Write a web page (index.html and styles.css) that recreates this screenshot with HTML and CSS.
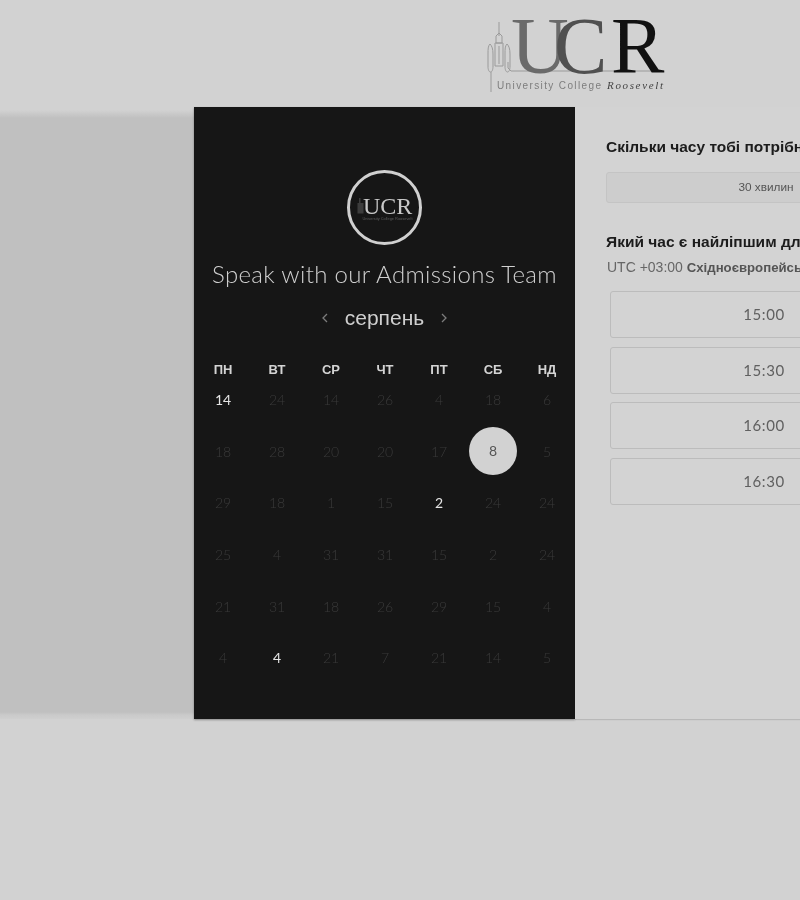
FILE: index.html
```html
<!DOCTYPE html>
<html lang="uk">
<head>
<meta charset="utf-8">
<title>Speak with our Admissions Team</title>
<link rel="stylesheet" href="styles.css">
</head>
<body>
<header class="top">
  <svg class="logo" width="180" height="80" viewBox="0 0 180 80" xmlns="http://www.w3.org/2000/svg">
    <g class="tower">
      <path d="M13 6V20M10 20L13 17L16 20V27H10ZM9 27H17V50H9ZM13 30V48"/>
      <path d="M4 28C2 30 2 33 2 38V50C2 54 3 56 4.500 56C6 56 7 54 7 50V38C7 33 6 30 4 28Z"/>
      <path d="M21 28C19 30 19 33 19 38V50C19 54 20 56 21.500 56C23 56 24 54 24 50V38C24 33 23 30 21 28Z"/>
      <path d="M5 56V76M22 46V52L25 55H178"/>
    </g>
    <text class="ucr" y="57" font-size="80"><tspan class="u" x="25">U</tspan><tspan class="c" x="68">C</tspan><tspan class="r" x="125">R</tspan></text>
    <text class="sub" x="11" y="73" textLength="104">University College</text>
    <text class="sub2" x="121" y="73" textLength="56">Roosevelt</text>
  </svg>
</header>
<main class="stage">
  <div class="band"></div>
  <section class="cal">
    <div class="badge">
      <svg class="mini" width="60" height="36" viewBox="0 0 60 36" xmlns="http://www.w3.org/2000/svg">
        <path class="mini-tower" d="M2.500 13h1.500V8h1.500v5h3v10.500h-6z"/>
        <text class="mini-ucr" x="8" y="23.500" font-size="24">UCR</text>
        <text class="mini-sub" x="7.500" y="30" textLength="50" lengthAdjust="spacingAndGlyphs">University College Roosevelt</text>
      </svg>
    </div>
    <h1 class="title">Speak with our Admissions Team</h1>
    <div class="month">
      <svg class="arrow" width="8" height="12" viewBox="0 0 8 12"><path d="M6 2L2 6L6 10"/></svg>
      <span class="month-name">серпень</span>
      <svg class="arrow" width="8" height="12" viewBox="0 0 8 12"><path d="M2 2L6 6L2 10"/></svg>
    </div>
    <div class="weekdays">
      <span>ПН</span><span>ВТ</span><span>СР</span><span>ЧТ</span><span>ПТ</span><span>СБ</span><span>НД</span>
    </div>
    <div class="days">
      <span class="on">14</span><span>24</span><span>14</span><span>26</span><span>4</span><span>18</span><span>6</span>
      <span>18</span><span>28</span><span>20</span><span>20</span><span>17</span><span class="sel"><b>8</b></span><span>5</span>
      <span>29</span><span>18</span><span>1</span><span>15</span><span class="on">2</span><span>24</span><span>24</span>
      <span>25</span><span>4</span><span>31</span><span>31</span><span>15</span><span>2</span><span>24</span>
      <span>21</span><span>31</span><span>18</span><span>26</span><span>29</span><span>15</span><span>4</span>
      <span>4</span><span class="on">4</span><span>21</span><span>7</span><span>21</span><span>14</span><span>5</span>
    </div>
  </section>
  <section class="side">
    <h2 class="q">Скільки часу тобі потрібно?</h2>
    <div class="duration">30 хвилин</div>
    <h2 class="q q2">Який час є найліпшим для тебе?</h2>
    <p class="tz">UTC +03:00 <strong>Східноєвропейський час</strong></p>
    <div class="slots">
      <div class="slot">15:00</div>
      <div class="slot">15:30</div>
      <div class="slot">16:00</div>
      <div class="slot">16:30</div>
    </div>
  </section>
</main>
</body>
</html>
```

FILE: styles.css
```css
html, body {
  margin: 0;
  height: 900px;
  overflow: hidden;
  background: #d2d2d2;
}

.top {
  height: 107px;
  padding-left: 486px;
  padding-top: 16px;
  box-sizing: border-box;
}

.logo {
  display: block;
  overflow: visible;
  filter: grayscale(1) blur(0.4px);
}

.tower path {
  fill: none;
  stroke: #9a9a9a;
  stroke-width: 1;
}

.ucr {
  font-family: "Liberation Serif", serif;
}

.u { fill: #6a6a6a; }
.c { fill: #505050; }
.r { fill: #111; }

.logo .sub {
  font-family: "Liberation Sans", sans-serif;
  font-size: 10px;
  fill: #7d7d7d;
}

.logo .sub2 {
  font-family: "Liberation Serif", serif;
  font-size: 11px;
  font-style: italic;
  fill: #444;
}

.stage {
  display: flex;
  height: 612px;
  width: 1000px;
  filter: grayscale(1) blur(0.3px);
}

.band {
  width: 194px;
  flex: none;
  background: linear-gradient(#d2d2d2 3px, #c0c0c0 11px, #c0c0c0 605px, #cacaca 608px, #cfcfcf 612px);
}

.cal {
  width: 381px;
  flex: none;
  box-sizing: border-box;
  padding: 63px 2px 0;
  background: #161616;
  box-shadow: 0 1px 2px rgba(0, 0, 0, 0.35);
}

.badge {
  width: 75px;
  height: 75px;
  margin: 0 auto;
  box-sizing: border-box;
  border: 3px solid #d0d0d0;
  border-radius: 50%;
  display: flex;
  align-items: center;
  justify-content: center;
}

.mini {
  overflow: visible;
  filter: blur(0.4px);
}

.mini-tower { fill: #3c3c3c; }

.mini-ucr {
  font-family: "Liberation Serif", serif;
  fill: #c8c8c8;
}

.mini-sub {
  font-family: "Liberation Sans", sans-serif;
  font-size: 4px;
  fill: #5c5c5c;
}

.title {
  margin: 14px 0 0;
  font-family: Lato, sans-serif;
  font-weight: 300;
  font-size: 24px;
  line-height: 30px;
  letter-spacing: 0.32px;
  color: #d0d0d0;
  text-align: center;
  white-space: nowrap;
}

.month {
  display: flex;
  justify-content: center;
  align-items: center;
  gap: 16px;
  height: 28px;
  margin-top: 15px;
}

.month-name {
  font-family: "Liberation Sans", sans-serif;
  font-size: 21px;
  line-height: 28px;
  color: #cfcfcf;
}

.arrow path {
  fill: none;
  stroke: #7c7c7c;
  stroke-width: 1.300;
}

.weekdays, .days {
  display: grid;
  grid-template-columns: repeat(7, 54px);
  justify-items: center;
  align-items: center;
}

.weekdays {
  margin-top: 27.500px;
  height: 20px;
  font-family: "Liberation Sans", sans-serif;
  font-weight: 700;
  font-size: 13px;
  color: #d4d4d4;
}

.days {
  grid-auto-rows: 51.600px;
  margin-top: -5.500px;
  font-family: Lato, sans-serif;
  font-size: 14px;
  font-weight: 300;
  color: #3a3a3a;
}

.days .on {
  color: #e4e4e4;
  font-weight: 400;
}

.sel {
  width: 48px;
  height: 48px;
  border-radius: 50%;
  background: #d2d2d2;
  display: flex;
  align-items: center;
  justify-content: center;
  color: #555;
}

.sel b {
  font-weight: 400;
  margin-bottom: 2px;
}

.side {
  flex: none;
  width: 425px;
  box-sizing: border-box;
  padding: 29px 0 0 31px;
  background: #d3d3d3;
  box-shadow: 0 1px 1px rgba(0, 0, 0, 0.12);
  font-family: "Liberation Sans", sans-serif;
}

.q {
  margin: 0;
  font-size: 15.500px;
  line-height: 22px;
  font-weight: 700;
  color: #1c1c1c;
  white-space: nowrap;
}

.duration {
  width: 320px;
  height: 31px;
  margin-top: 14px;
  box-sizing: border-box;
  border: 1px solid #c4c4c4;
  border-radius: 3px;
  background: #cdcdcd;
  font-size: 11.800px;
  line-height: 29px;
  text-align: center;
  color: #555;
}

.q2 {
  margin-top: 28px;
}

.tz {
  margin: 4px 0 0 1px;
  font-size: 14px;
  line-height: 20px;
  color: #666;
  white-space: nowrap;
}

.tz strong {
  font-size: 13.200px;
  color: #555;
}

.slots {
  display: flex;
  flex-direction: column;
  gap: 8.700px;
  margin: 13px 0 0 4px;
}

.slot {
  width: 308px;
  height: 47px;
  box-sizing: border-box;
  border: 1px solid #bcbcbc;
  border-radius: 3px;
  font-family: Lato, sans-serif;
  font-size: 15px;
  letter-spacing: 0.6px;
  line-height: 45px;
  text-align: center;
  color: #606060;
}
```
